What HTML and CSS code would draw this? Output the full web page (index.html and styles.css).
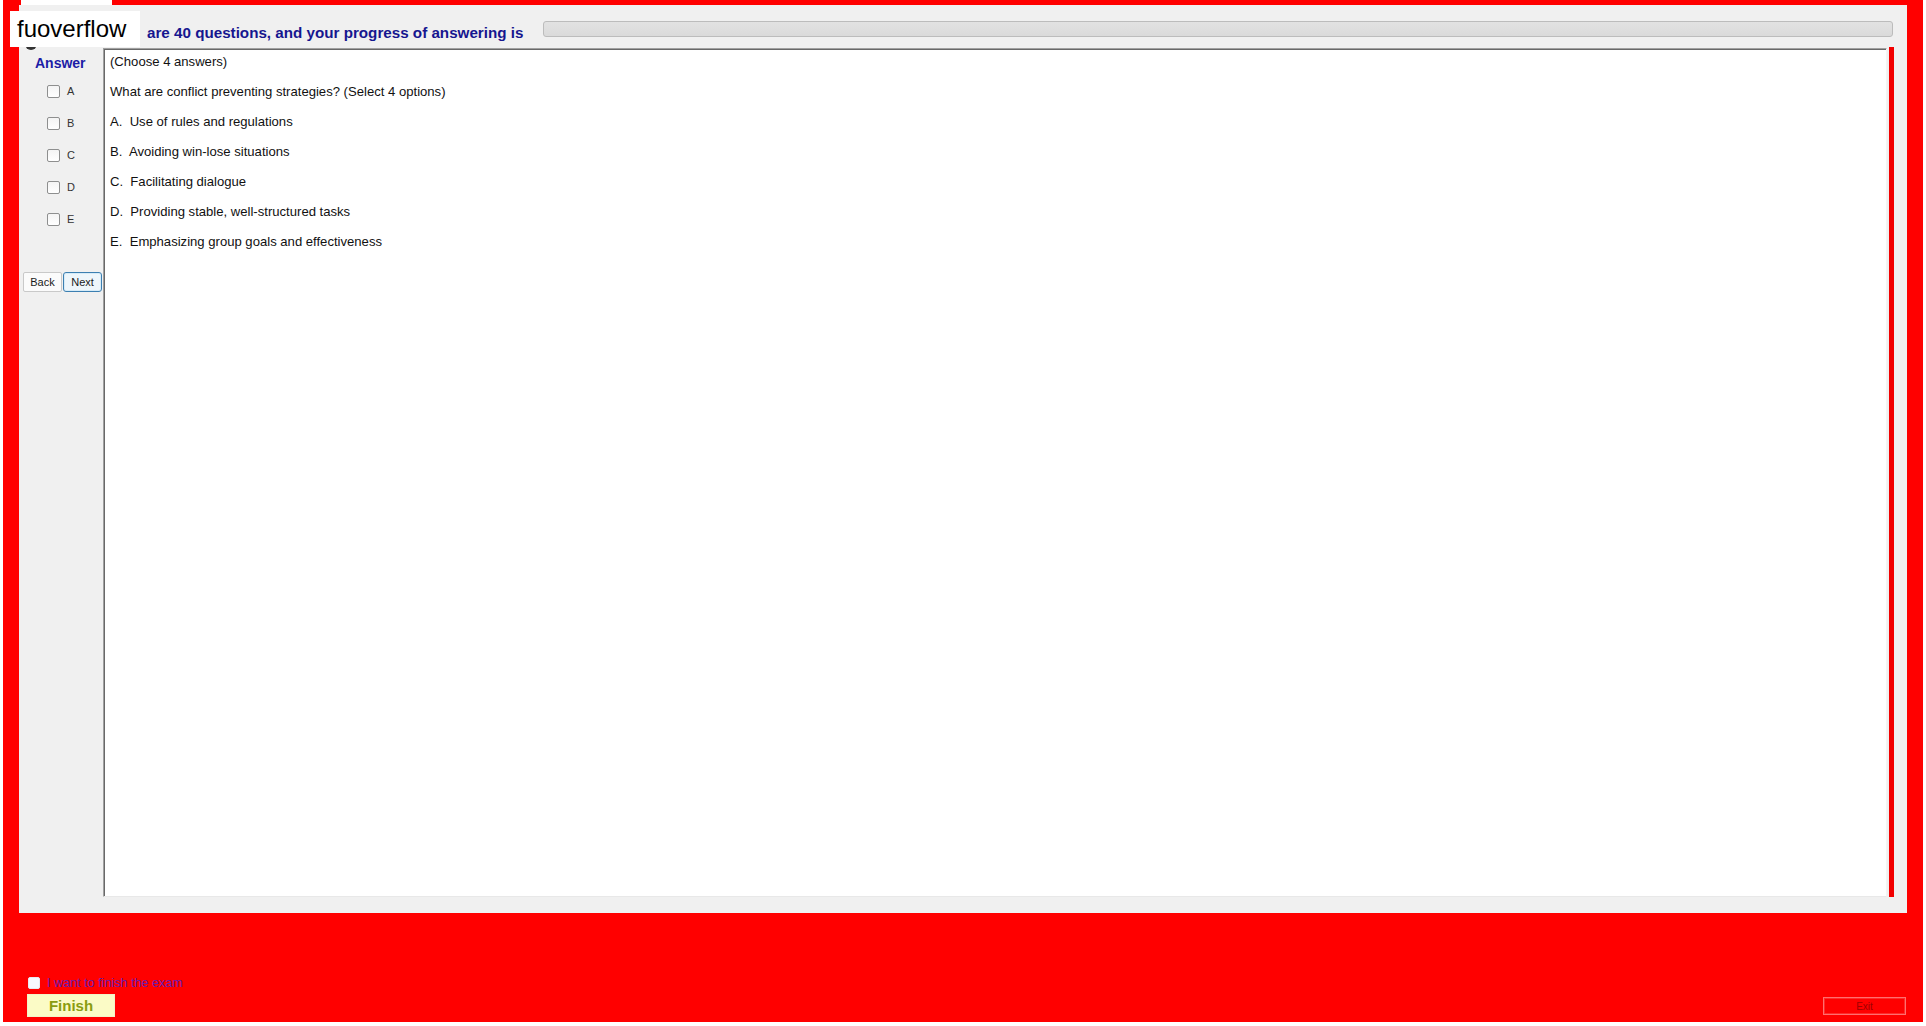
FILE: index.html
```html
<!DOCTYPE html>
<html>
<head>
<meta charset="utf-8">
<title>Exam</title>
<link rel="stylesheet" href="styles.css">
</head>
<body>
<div class="screen">
  <div class="tabstrip"><div class="tab"></div></div>
  <div class="panel">
    <div class="header">
      <div class="title">are 40 questions, and your progress of answering is</div>
      <div class="progress"></div>
    </div>
    <div class="body">
      <div class="side">
        <div class="answer-title">Answer</div>
        <div class="choices">
          <label class="choice"><input type="checkbox" class="box"><span>A</span></label>
          <label class="choice"><input type="checkbox" class="box"><span>B</span></label>
          <label class="choice"><input type="checkbox" class="box"><span>C</span></label>
          <label class="choice"><input type="checkbox" class="box"><span>D</span></label>
          <label class="choice"><input type="checkbox" class="box"><span>E</span></label>
        </div>
        <div class="nav">
          <button class="btn">Back</button>
          <button class="btn btn-focus">Next</button>
        </div>
      </div>
      <div class="content">
        <div class="line">(Choose 4 answers)</div>
        <div class="line">What are conflict preventing strategies? (Select 4 options)</div>
        <div class="line">A.&nbsp; Use of rules and regulations</div>
        <div class="line">B.&nbsp; Avoiding win-lose situations</div>
        <div class="line">C.&nbsp; Facilitating dialogue</div>
        <div class="line">D.&nbsp; Providing stable, well-structured tasks</div>
        <div class="line">E.&nbsp; Emphasizing group goals and effectiveness</div>
      </div>
      <div class="scroll-strip"></div>
    </div>
  </div>
  <div class="footer">
    <div class="finish-group">
      <label class="confirm"><input type="checkbox" class="box box-small"><span>I want to finish the exam</span></label>
      <button class="finish">Finish</button>
    </div>
    <button class="exit">Exit</button>
  </div>
  <div class="dot"></div>
  <div class="brand">fuoverflow</div>
</div>
</body>
</html>
```

FILE: styles.css
```css
html, body {
  margin: 0;
  padding: 0;
  width: 1926px;
  height: 1026px;
  overflow: hidden;
  background: #ffffff;
  font-family: "Liberation Sans", Arial, sans-serif;
}

.screen {
  position: relative;
  box-sizing: border-box;
  width: 1920px;
  height: 1022px;
  margin: 0 3px;
  padding: 0 16px;
  background: #ff0000;
}

.tabstrip {
  height: 5px;
  display: flex;
}

.tab {
  margin-left: 2px;
  width: 91px;
  height: 5px;
  background: #ffffff;
}

.panel {
  height: 908px;
  background: #f0f0f0;
  display: flex;
  flex-direction: column;
}

.header {
  height: 43px;
  display: flex;
  align-items: flex-start;
  padding-left: 128px;
  padding-right: 14px;
  box-sizing: border-box;
}

.title {
  margin-top: 19px;
  line-height: 18px;
  font-size: 15.2px;
  font-weight: bold;
  color: #16168f;
  white-space: nowrap;
}

.progress {
  flex: 1;
  margin-left: 20px;
  margin-top: 16px;
  height: 16px;
  box-sizing: border-box;
  border: 1px solid #bcbcbc;
  border-radius: 3px;
  background: linear-gradient(#e2e2e2, #dadada);
}

.body {
  height: 849px;
  display: flex;
}

.side {
  width: 84px;
  flex: none;
  display: flex;
  flex-direction: column;
}

.answer-title {
  margin-top: 6px;
  padding-left: 16px;
  line-height: 18px;
  font-size: 14px;
  font-weight: bold;
  color: #1c1ca6;
}

.choices {
  margin-top: 3px;
  display: flex;
  flex-direction: column;
}

.choice {
  height: 32px;
  display: flex;
  align-items: center;
  font-size: 11px;
  color: #333333;
}

.box {
  appearance: none;
  -webkit-appearance: none;
  margin: 0 0 0 28px;
  width: 13px;
  height: 13px;
  box-sizing: border-box;
  border: 1px solid #8e8f8f;
  border-radius: 2px;
  background: linear-gradient(#f4f4f4, #ffffff);
}

.choice span {
  margin-left: 7px;
}

.nav {
  margin-top: 37px;
  padding-left: 4px;
  display: flex;
  gap: 1px;
}

.btn {
  width: 39px;
  height: 20px;
  padding: 0;
  box-sizing: border-box;
  border: 1px solid #c9c9c9;
  border-radius: 2px;
  background: #fbfbfb;
  font-family: "Liberation Sans", Arial, sans-serif;
  font-size: 11px;
  color: #1a1a1a;
}

.btn-focus {
  border-color: #3c7fb1;
  border-radius: 3px;
  background: #eef6fb;
  box-shadow: inset 0 0 0 1px #d6ebf7;
}

.content {
  width: 1784px;
  height: 849px;
  flex: none;
  box-sizing: border-box;
  padding-left: 6px;
  background: #ffffff;
  border: 1px solid;
  border-color: #a0a0a0 #f4f4f4 #e8e8e8 #a0a0a0;
  box-shadow: inset 1px 1px 0 #696969;
  font-size: 13.1px;
  color: #111111;
}

.line {
  line-height: 24px;
  margin-bottom: 6px;
  white-space: nowrap;
}

.line:first-child {
  margin-top: 1px;
}

.scroll-strip {
  margin-left: 2px;
  margin-top: -1px;
  width: 5px;
  height: 850px;
  flex: none;
  background: #f20000;
}

.footer {
  height: 109px;
  box-sizing: border-box;
  display: flex;
  justify-content: space-between;
  align-items: flex-end;
  padding: 0 1px 5px 8px;
}

.finish-group {
  display: flex;
  flex-direction: column;
}

.confirm {
  display: flex;
  align-items: center;
  height: 12px;
  font-size: 12.6px;
  color: #6a1cb0;
}

.box-small {
  margin-left: 1px;
  width: 12px;
  height: 12px;
  border-color: #e8e8f0;
  background: #f8f8ff;
}

.confirm span {
  margin-left: 7px;
}

.finish {
  margin-top: 5px;
  width: 88px;
  height: 23px;
  padding: 0;
  border: 1px solid #f2f2c8;
  background: #fbfbc6;
  font-family: "Liberation Sans", Arial, sans-serif;
  font-size: 15px;
  font-weight: bold;
  color: #8a9c10;
}

.exit {
  margin-bottom: 2px;
  width: 83px;
  height: 18px;
  padding: 0;
  border: 1px solid #ff6f6f;
  background: #ff0000;
  box-shadow: inset 0 0 0 1px #ff2a2a;
  font-family: "Liberation Sans", Arial, sans-serif;
  font-size: 10px;
  color: #a00000;
}

.brand {
  position: absolute;
  left: 7px;
  top: 11px;
  width: 123px;
  height: 36px;
  padding-left: 7px;
  background: #ffffff;
  font-size: 24px;
  line-height: 36px;
  color: #000000;
}

.dot {
  position: absolute;
  left: 22px;
  top: 38px;
  width: 12px;
  height: 12px;
  border-radius: 50%;
  background: #333333;
}
```
